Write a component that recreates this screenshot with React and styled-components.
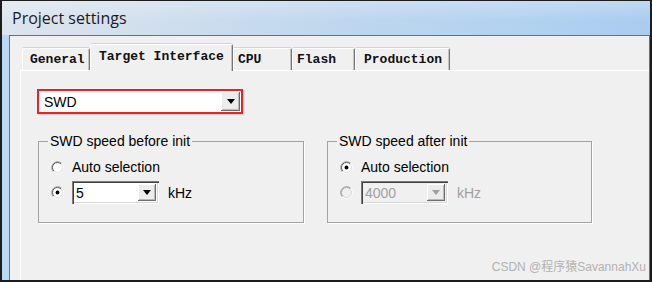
import React from "react";
import styled, { createGlobalStyle } from "styled-components";

const GlobalStyle = createGlobalStyle`
  html, body {
    margin: 0;
    padding: 0;
    background: #f0f0f0;
  }
  * {
    box-sizing: border-box;
  }
`;

const Window = styled.div`
  position: relative;
  width: 652px;
  height: 282px;
  display: flex;
  flex-direction: column;
  border: 2px solid #1c1c1c;
  border-top-width: 1px;
  overflow: hidden;
  font-family: "Liberation Sans", Arial, sans-serif;
  color: #000;
`;

const TitleBar = styled.div`
  height: 34px;
  flex: none;
  display: flex;
  align-items: center;
  padding-left: 10px;
  background:
    linear-gradient(180deg, rgba(255, 255, 255, 0.25) 0%, rgba(255, 255, 255, 0) 60%),
    linear-gradient(90deg, #dde5ee 0%, #cfdeed 25%, #bdd6ee 55%, #b2d2f0 80%, #a9ccef 100%);
  font: 400 16px "Open Sans", "Liberation Sans", sans-serif;
  color: #1b1b1b;
`;

const Body = styled.div`
  flex: 1;
  display: flex;
  min-height: 0;
  border-left: 7px solid #b9d8f6;
`;

const Inner = styled.div`
  flex: 1;
  display: flex;
  flex-direction: column;
  padding: 8px 0 0 10px;
  background: #f0f0f0;
  border-top: 1px solid #6f6f6f;
  border-left: 1px solid #6f6f6f;
  border-right: 1px solid #6f6f6f;
`;

const TabStrip = styled.div`
  height: 26px;
  display: flex;
  align-items: flex-end;
  padding-left: 2px;
`;

const Tab = styled.div`
  position: relative;
  z-index: ${(p) => (p.$active ? 2 : 1)};
  width: ${(p) => p.$w}px;
  height: ${(p) => (p.$active ? 27 : 22)}px;
  margin-bottom: ${(p) => (p.$active ? -1 : 0)}px;
  padding: ${(p) => (p.$active ? 4 : 3)}px 0 0 ${(p) => p.$pad}px;
  background: #f0f0f0;
  border-top: 1px solid #fff;
  border-left: 1px solid #fff;
  border-right: 1px solid #767676;
  border-radius: 2px 2px 0 0;
  box-shadow: inset -1px 0 0 #c4c4c4, 0 -1px 0 #d4d4d4;
  font: 700 13px/16px "Liberation Mono", monospace;
  color: #111;
  white-space: nowrap;
`;

const Panel = styled.div`
  flex: 1;
  padding: 18px 0 0 16px;
  border-top: 1px solid #fff;
  border-left: 1px solid #fff;
`;

const BigCombo = styled.div`
  width: 206px;
  height: 25px;
  display: flex;
  align-items: center;
  border: 2px solid #e3242b;
  background: #fff;
  box-shadow: 1px 1px 0 #d0d0d0, 2px 2px 0 #e8e8e8;
`;

const ComboText = styled.div`
  flex: 1;
  padding-left: ${(p) => p.$pad || 5}px;
  font-size: 14px;
  color: ${(p) => (p.$disabled ? "#a0a0a0" : "#000")};
`;

const DropButton = styled.div`
  width: ${(p) => p.$w || 19}px;
  align-self: stretch;
  margin: 1px;
  display: flex;
  align-items: center;
  justify-content: center;
  background: #ececec;
  box-shadow: inset -1px -1px 0 #6e6e6e, inset 1px 1px 0 #fff, inset -2px -2px 0 #b8b8b8;
`;

const Arrow = styled.div`
  width: 0;
  height: 0;
  border-left: 4px solid transparent;
  border-right: 4px solid transparent;
  border-top: 5px solid ${(p) => (p.$disabled ? "#a0a0a0" : "#000")};
`;

const Groups = styled.div`
  display: flex;
  gap: 23px;
  margin: 19px 0 0 1px;
`;

const Group = styled.fieldset`
  width: ${(p) => p.$w}px;
  height: 90px;
  margin: 0;
  padding: 8px 0 0 12px;
  border: 1px solid #a3a3a3;
  box-shadow: 1px 1px 0 #fff;
  display: flex;
  flex-direction: column;
  gap: 4px;
`;

const Legend = styled.legend`
  margin-left: -3px;
  padding: 0 2px;
  font-size: 14px;
  line-height: 16px;
`;

const Row = styled.div`
  height: ${(p) => p.$h}px;
  display: flex;
  align-items: center;
  gap: 8px;
  font-size: 14px;
  color: ${(p) => (p.$disabled ? "#a0a0a0" : "#000")};
`;

const SmallCombo = styled.div`
  width: 87px;
  height: 23px;
  display: flex;
  align-items: center;
  margin-right: 1px;
  background: ${(p) => (p.$disabled ? "#f0f0f0" : "#fff")};
  box-shadow: inset 1px 1px 0 #7c7c7c, inset 2px 2px 0 #404040,
    inset -1px -1px 0 #fff, inset -2px -2px 0 #d8d8d8;
  padding: 2px;
`;

const Watermark = styled.div`
  position: absolute;
  right: 4px;
  bottom: 6px;
  font: 12px "Liberation Sans", "Noto Sans CJK SC", sans-serif;
  color: #b2b2b2;
`;

const Radio = ({ checked, disabled }) => (
  <svg width="13" height="13" viewBox="0 0 13 13">
    <circle cx="6.5" cy="6.5" r="5.5" fill={disabled ? "#f0f0f0" : "#fff"} />
    <path d="M2.26 10.74A6 6 0 0 1 10.74 2.26" stroke="#a0a0a0" fill="none" />
    <path d="M2.96 10.04A5 5 0 0 1 10.04 2.96" stroke={disabled ? "#a8a8a8" : "#5a5a5a"} fill="none" />
    <path d="M10.74 2.26A6 6 0 0 1 2.26 10.74" stroke="#fff" fill="none" />
    <path d="M10.04 2.96A5 5 0 0 1 2.96 10.04" stroke="#dcdcdc" fill="none" />
    {checked && <circle cx="6.5" cy="6.5" r="1.9" fill="#000" />}
  </svg>
);

const tabs = [
  { label: "General", w: 68, pad: 7 },
  { label: "Target Interface", w: 143, pad: 8, active: true },
  { label: "CPU", w: 59, pad: 4 },
  { label: "Flash", w: 63, pad: 4 },
  { label: "Production", w: 95, pad: 8 },
];

const SpeedGroup = ({ title, w, auto, value, disabled }) => (
  <Group $w={w}>
    <Legend>{title}</Legend>
    <Row $h={20}>
      <Radio checked={auto} />
      Auto selection
    </Row>
    <Row $h={23} $disabled={disabled}>
      <Radio checked={!auto} disabled={disabled} />
      <SmallCombo $disabled={disabled}>
        <ComboText $pad={2} $disabled={disabled}>{value}</ComboText>
        <DropButton $w={18}>
          <Arrow $disabled={disabled} />
        </DropButton>
      </SmallCombo>
      kHz
    </Row>
  </Group>
);

export default function App() {
  return (
    <>
      <GlobalStyle />
      <Window>
        <TitleBar>Project settings</TitleBar>
        <Body>
          <Inner>
            <TabStrip>
              {tabs.map((t) => (
                <Tab key={t.label} $w={t.w} $pad={t.pad} $active={t.active}>
                  {t.label}
                </Tab>
              ))}
            </TabStrip>
            <Panel>
              <BigCombo>
                <ComboText>SWD</ComboText>
                <DropButton>
                  <Arrow />
                </DropButton>
              </BigCombo>
              <Groups>
                <SpeedGroup title="SWD speed before init" w={266} value="5" />
                <SpeedGroup title="SWD speed after init" w={265} auto value="4000" disabled />
              </Groups>
            </Panel>
          </Inner>
        </Body>
        <Watermark>CSDN @程序猿SavannahXu</Watermark>
      </Window>
    </>
  );
}
